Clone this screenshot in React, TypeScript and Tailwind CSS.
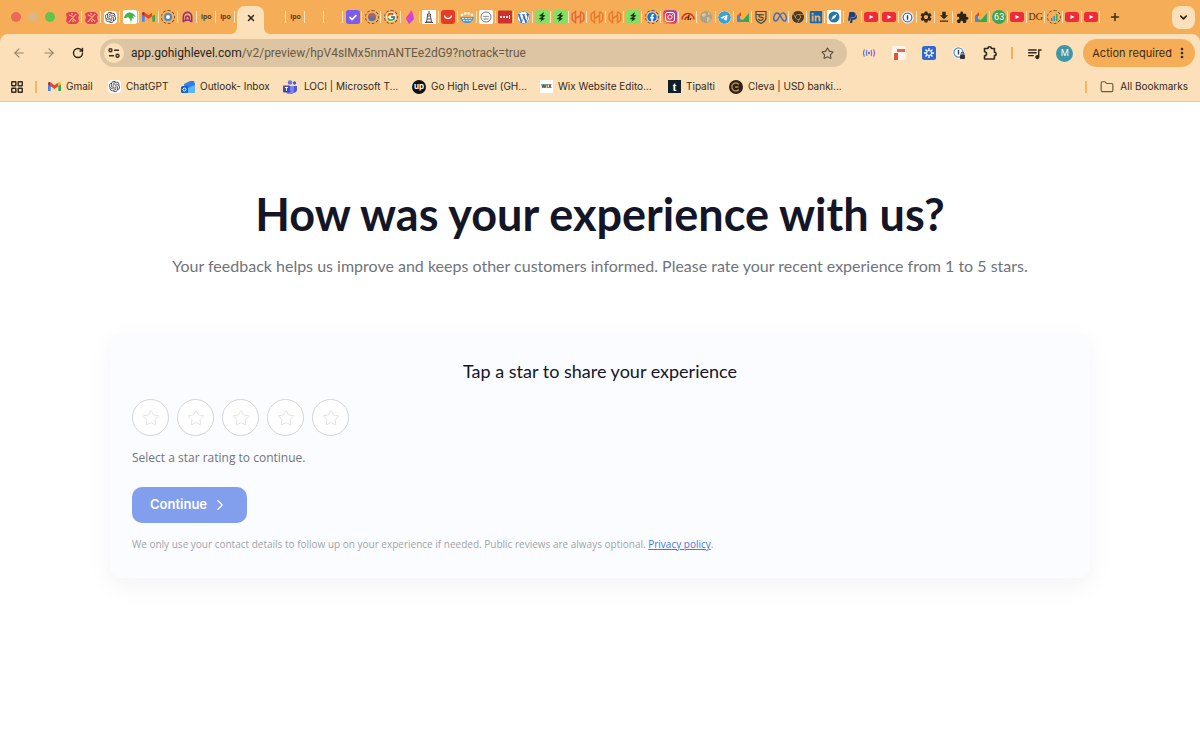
import { useState, type ReactNode } from 'react';
import {
  ArrowLeft,
  ArrowRight,
  ChevronDown,
  ChevronRight,
  Folder,
  LayoutGrid,
  Plus,
  RotateCw,
  Star,
  X,
} from 'lucide-react';
import {
  SiOpenai,
  SiTelegram,
  SiWordpress,
  SiInstagram,
  SiMeta,
  SiPaypal,
  SiGooglechrome,
} from 'react-icons/si';
import { FaFacebook, FaLinkedin } from 'react-icons/fa';
import { FcGoogle } from 'react-icons/fc';
import { MdDownload, MdExtension, MdMoreVert, MdQueueMusic, MdSettings } from 'react-icons/md';

const GmailIcon = () => (
  <svg viewBox="0 0 24 18" className="w-[13px]">
    <path d="M0 3v13a2 2 0 0 0 2 2h3V7L0 3z" fill="#4285f4" />
    <path d="M19 7v11h3a2 2 0 0 0 2-2V3l-5 4z" fill="#34a853" />
    <path d="M5 1v7l7 5 7-5V1l-7 5-7-5z" fill="#ea4335" />
    <path d="M0 3c0-3 3-4 5-2v7L0 4V3z" fill="#c5221f" />
    <path d="M24 3c0-3-3-4-5-2v7l5-4V3z" fill="#fbbc04" />
  </svg>
);

const GptIcon = () => (
  <span className="flex size-[13px] items-center justify-center rounded-sm bg-white">
    <SiOpenai className="size-[11px] text-[#333]" />
  </span>
);

const PinkIcon = () => (
  <svg viewBox="0 0 14 14" className="size-[13px]">
    <path d="M3 1h8l3 3-1 3 1 4-3 3H3l-3-3 1-4-1-4z" fill="#e0405a" />
    <path d="M3 12 11 3M3 4l4 2M11 11 7 8M6 2l1 2M8 12l-1-2" stroke="#f7b267" strokeWidth="1.300" fill="none" />
  </svg>
);

const LizardIcon = () => (
  <svg viewBox="0 0 14 14" className="size-[14px]">
    <rect width="14" height="14" rx="2" fill="#fff" />
    <path d="M1 8C2 2 9 0 13 7l-3-1 1 3-2-1-1 5-1-4-2-2-2 1z" fill="#43b649" />
  </svg>
);

// 점선 원으로 둘러싸인 파비콘 (로딩 중인 탭)
const Ringed = ({ children }: { children: ReactNode }) => (
  <span className="flex size-[14px] items-center justify-center rounded-full border border-dashed border-[#6b5334]">
    {children}
  </span>
);

const ArchIcon = () => (
  <svg viewBox="0 0 14 14" className="size-[13px]" fill="none" stroke="#9b2f86" strokeWidth="1.700">
    <path d="M2.500 12V6a4.500 4.500 0 0 1 9 0v6M2.500 11.500 5 10h4l2.500 1.500M5 10V7.500a2 2 0 0 1 4 0V10" />
  </svg>
);

const UpworkIcon = () => (
  <span className="font-['Liberation_Sans',sans-serif] text-[7px] leading-3 font-bold text-[#4b3a22]">ipo</span>
);

const CheckIcon = () => (
  <svg viewBox="0 0 14 14" className="size-[14px]">
    <rect width="14" height="14" rx="2.500" fill="#7b5cf0" />
    <path d="m3.500 7 2.500 2.500L10.500 5" stroke="#fff" strokeWidth="1.700" fill="none" />
  </svg>
);

const FlameIcon = () => (
  <svg viewBox="0 0 14 14" className="size-[14px]">
    <path d="M8 0c1 2 3 4 2 8l-4 6-3-5c0-3 4-5 5-9z" fill="#e63fd0" />
    <path d="M6 14c-1-3 3-5 4-9l1 4-5 5z" fill="#a94df0" />
  </svg>
);

const TowerIcon = () => (
  <svg viewBox="0 0 14 14" className="size-[14px]">
    <rect width="14" height="14" fill="#fff" />
    <path d="M7 1v3M5.500 4h3v2h-3zM5.500 6 4.500 12h5L8.500 6M5 9h4M3 12.500h8" stroke="#555" fill="none" />
  </svg>
);

const RedSmileIcon = () => (
  <svg viewBox="0 0 14 14" className="size-[14px]">
    <rect width="14" height="14" rx="3" fill="#e33b25" />
    <path d="M3.500 5.500c.5 4 6.500 4 7 0" stroke="#fff" strokeWidth="1.300" fill="none" />
  </svg>
);

const CrowdIcon = () => (
  <svg viewBox="0 0 14 14" className="size-[14px]">
    <path d="M0 7h14c-1 4-3 6-7 6S1 11 0 7z" fill="#4c9ed0" />
    <path d="M2 8.500h10M3 10.500h8" stroke="#d8ecf5" strokeDasharray="2 1" />
    <g fill="#eaf3ea">
      <circle cx="2" cy="5" r="1.400" />
      <circle cx="5.300" cy="3.500" r="1.400" />
      <circle cx="8.700" cy="3.500" r="1.400" />
      <circle cx="12" cy="5" r="1.400" />
    </g>
  </svg>
);

const StampIcon = () => (
  <svg viewBox="0 0 14 14" className="size-[14px]">
    <rect width="14" height="14" rx="2" fill="#fff" />
    <circle cx="7" cy="7" r="5" fill="none" stroke="#777" />
    <path d="M4 6.500c1-1 2 1 3 0s2 1 3 0M4.500 9h5" stroke="#777" fill="none" />
  </svg>
);

const DotsIcon = () => (
  <svg viewBox="0 0 14 14" className="size-[14px]">
    <rect width="14" height="13" y=".5" rx="1" fill="#c8322f" />
    <g fill="#fff">
      <circle cx="3" cy="7" r="1.100" />
      <circle cx="6" cy="7" r="1.100" />
      <circle cx="9" cy="7" r="1.100" />
      <path d="M11 5h1v4h-1z" />
    </g>
  </svg>
);

const GreenBoltIcon = () => (
  <svg viewBox="0 0 14 14" className="size-[14px]">
    <rect width="14" height="14" rx="2.500" fill="#84e063" />
    <path d="M9 2 4 6l3 .5L3.500 9l3 .5L5 12l5-3.500-2.500-.5 3-2.500-2.500-.500z" fill="#16351d" />
  </svg>
);

const HexIcon = ({ color }: { color: string }) => (
  <svg viewBox="0 0 14 14" className="size-[14px]" fill="none" stroke={color} strokeWidth="1.500">
    <path d="M1.200 10V4l3.300-2.500v11L1.200 10M4.500 8.500l5-3M9.500 1.500v11l3.300-2.500V4L9.500 1.500" />
  </svg>
);

const GaugeIcon = () => (
  <svg viewBox="0 0 14 14" className="size-[14px]" fill="none" stroke="#cc2f1c" strokeWidth="1.500">
    <path d="M1 9.500a6 6 0 0 1 12 0M4 10a3 3 0 0 1 3-3" />
    <path d="m7 10 1-5M9 10l1-2" stroke="#5a2a17" />
  </svg>
);

const GlobeIcon = () => (
  <svg viewBox="0 0 14 14" className="size-[14px]">
    <circle cx="7" cy="7" r="6" fill="#a9a28f" />
    <path d="M3 4l3-1 1 2-2 2-2-1zM8 7l3 1-1 3-2 1zM9 2l2 2-2 1z" fill="#e5c590" />
  </svg>
);

const MeetIcon = () => (
  <svg viewBox="0 0 14 14" className="size-[14px]">
    <path d="M1 6l4-4v4z" fill="#ea4335" />
    <path d="M1 6h3v6H2a1 1 0 0 1-1-1z" fill="#4285f4" />
    <path d="M5 2h3v4H5z" fill="#fbbc04" />
    <path d="M4 12V9l3 1 6-7v9z" fill="#34a853" />
  </svg>
);

const ShieldIcon = () => (
  <svg viewBox="0 0 14 14" className="size-[14px]" fill="none" stroke="#4a4a45" strokeWidth="1.200">
    <path d="M2 1.500h10V8c0 3-3 4.500-5 5.500C5 12.500 2 11 2 8z" />
    <path d="M2 4.500h6M10 5C7 4 4 5 5 6.500s5 0 4 2.500-4 1-5 0" />
  </svg>
);

const CompassIcon = () => (
  <svg viewBox="0 0 14 14" className="size-[14px]">
    <rect width="14" height="14" fill="#fff" />
    <circle cx="7" cy="7" r="5.500" fill="#2478a8" />
    <path d="m10 4-2 4-4 2 2-4z" fill="#fff" />
  </svg>
);

const OnePassIcon = () => (
  <svg viewBox="0 0 14 14" className="size-[13px]">
    <circle cx="7" cy="7" r="6.500" fill="#fff" />
    <circle cx="7" cy="7" r="4.700" fill="none" stroke="#3b74c9" strokeWidth="1.400" />
    <path d="M7 4.500v5" stroke="#33445c" strokeWidth="1.600" />
  </svg>
);

const YoutubeIcon = () => (
  <svg viewBox="0 0 14 10" className="w-[14px]">
    <rect width="14" height="10" rx="2.500" fill="#ed2b3a" />
    <path d="m5.500 3 4 2-4 2z" fill="#fff" />
  </svg>
);

const ChatCountIcon = () => (
  <span className="flex size-[14px] items-center justify-center rounded-full bg-[#3fa35b] font-['Roboto',sans-serif] text-[9px] leading-none text-white">
    63
  </span>
);

const MonogramIcon = () => (
  <span className="font-['Liberation_Serif',serif] text-[10px] leading-3 text-[#4a3212]">DG</span>
);

const BarsIcon = () => (
  <svg viewBox="0 0 8 8" className="size-2">
    <path d="M1 8V5h1.500v3zM3.500 8V3H5v5z" fill="#3c8fc0" />
    <path d="M6 8V1h1.500v7z" fill="#4aa84a" />
  </svg>
);

const firstTabs: ReactNode[] = [
  <PinkIcon />,
  <PinkIcon />,
  <GptIcon />,
  <LizardIcon />,
  <GmailIcon />,
  <Ringed><span className="size-2 rounded-full border-2 border-[#4d86c6] bg-white" /></Ringed>,
  <ArchIcon />,
  <UpworkIcon />,
  <UpworkIcon />,
];

const middleTabs: ReactNode[] = [
  null,
  <UpworkIcon />,
  null,
  null,
  <CheckIcon />,
  <Ringed><span className="size-2 rounded-full bg-linear-to-b from-[#b95a5a] to-[#3f6cb0]" /></Ringed>,
  <Ringed><FcGoogle className="size-[10px] rounded-full bg-white" /></Ringed>,
  <FlameIcon />,
  <TowerIcon />,
  <RedSmileIcon />,
  <CrowdIcon />,
  <StampIcon />,
];

const lastTabs: ReactNode[] = [
  <DotsIcon />,
  <SiWordpress className="size-[13px] rounded-full bg-white text-[#2d6bc0]" />,
  <GreenBoltIcon />,
  <GreenBoltIcon />,
  <HexIcon color="#e4663a" />,
  <HexIcon color="#ea7a2a" />,
  <HexIcon color="#ea7a2a" />,
  <GreenBoltIcon />,
  <Ringed><FaFacebook className="size-[10px] rounded-full bg-white text-[#1b6fe0]" /></Ringed>,
  <span className="flex size-[14px] items-center justify-center rounded bg-linear-to-tr from-[#f9a13a] via-[#e22c6a] to-[#8a3ac8]">
    <SiInstagram className="size-[10px] text-white" />
  </span>,
  <GaugeIcon />,
  <GlobeIcon />,
  <SiTelegram className="size-[13px] rounded-full bg-white text-[#35a3dc]" />,
  <MeetIcon />,
  <ShieldIcon />,
  <SiMeta className="size-[14px] text-[#3d6db5]" />,
  <SiGooglechrome className="size-[12px] text-[#453a2b]" />,
  <FaLinkedin className="size-[14px] text-[#1169b5]" />,
  <CompassIcon />,
  <SiPaypal className="size-[11px] text-[#1d3f86]" />,
  <YoutubeIcon />,
  <YoutubeIcon />,
  <OnePassIcon />,
  <MdSettings className="size-[14px] text-[#33291a]" />,
  <MdDownload className="size-[14px] text-[#33291a]" />,
  <MdExtension className="size-[13px] text-[#2a2218]" />,
  <MeetIcon />,
  <ChatCountIcon />,
  <YoutubeIcon />,
  <MonogramIcon />,
  <Ringed><BarsIcon /></Ringed>,
  <YoutubeIcon />,
  <YoutubeIcon />,
];

const Tabs = ({ icons, className }: { icons: ReactNode[]; className: string }) => (
  <div className={`flex ${className}`}>
    {icons.map((icon, i) => (
      <div key={i} className="relative flex h-[14px] min-w-0 flex-1 items-center justify-center">
        {icon}
        <span className="absolute right-0 h-3 w-px bg-[#fde3bd]" />
      </div>
    ))}
  </div>
);

const TabStrip = () => (
  <div className="flex h-[34px] items-center bg-[#f5ae57]">
    <div className="flex w-[63px] items-center gap-[7px] pl-[11px]">
      <span className="size-[10px] rounded-full bg-[#ec695c]" />
      <span className="size-[10px] rounded-full bg-[#dcb587]" />
      <span className="size-[10px] rounded-full bg-[#5ec548]" />
    </div>
    <Tabs icons={firstTabs} className="w-[172px]" />
    <div className="flex w-8 items-end self-stretch pl-[2px]">
      <div className="relative flex h-7 w-[27px] items-center justify-center rounded-t-lg bg-[#fbe0b9]">
        <button aria-label="Close tab" className="pb-[5px]">
          <X className="size-[10px] text-[#2e2519]" strokeWidth={3.5} />
        </button>
        <svg viewBox="0 0 6 6" className="absolute bottom-0 -left-1.5 size-1.5" fill="#fbe0b9">
          <path d="M6 0v6H0a6 6 0 0 0 6-6z" />
        </svg>
        <svg viewBox="0 0 6 6" className="absolute -right-1.5 bottom-0 size-1.5" fill="#fbe0b9">
          <path d="M0 0v6h6a6 6 0 0 1-6-6z" />
        </svg>
      </div>
    </div>
    <Tabs icons={middleTabs} className="w-[229px]" />
    <Tabs icons={lastTabs} className="min-w-0 flex-1" />
    <div className="flex w-[100px] items-center justify-between pr-[5px] pl-[9px]">
      <button aria-label="New tab">
        <Plus className="size-3 text-[#3a2c18]" strokeWidth={3} />
      </button>
      <button aria-label="Search tabs" className="flex size-[23px] items-center justify-center rounded-lg bg-[#fbe0b9]">
        <ChevronDown className="size-[11px] text-[#2e2519]" strokeWidth={3.5} />
      </button>
    </div>
  </div>
);

const Toolbar = () => (
  <div className="flex h-[38px] items-center pr-[5px] pl-3">
    <div className="flex w-[88px] items-center gap-4">
      <button aria-label="Back"><ArrowLeft className="size-[14px] text-[#9a8466]" /></button>
      <button aria-label="Forward"><ArrowRight className="size-[14px] text-[#9a8466]" /></button>
      <button aria-label="Reload"><RotateCw className="size-3 text-[#2e2519]" strokeWidth={2.8} /></button>
    </div>
    <div className="flex h-7 flex-1 items-center rounded-full bg-[#ddc5a3] pr-[13px] pl-1">
      <button aria-label="View site information" className="flex size-5 items-center justify-center rounded-full bg-[#fbe0b9]">
        <svg viewBox="0 0 12 12" className="size-3" fill="none" stroke="#3b2f20" strokeWidth="1.400">
          <circle cx="2.500" cy="3.200" r="1.500" />
          <path d="M6 3.200h5M1 8.800h5" />
          <circle cx="9.500" cy="8.800" r="1.500" />
        </svg>
      </button>
      <div className="ml-[7px] flex-1 font-['Roboto',sans-serif] text-[12px] whitespace-nowrap text-[#6a5a44]">
        <span className="text-[#2b2318]">app.gohighlevel.com</span>/v2/preview/hpV4sIMx5nmANTEe2dG9?notrack=true
      </div>
      <button aria-label="Bookmark this tab"><Star className="size-[13px] text-[#5c4d3a]" strokeWidth={2} /></button>
    </div>
    <div className="flex items-center pl-[15px]">
      <svg viewBox="0 0 14 14" className="size-[14px]" fill="none" strokeWidth="1.200">
        <path d="M2.500 3.500q-2 3.500 0 7M5 4q-1.200 3 0 6" stroke="#5b7be0" />
        <path d="M9 4q1.200 3 0 6M11.500 3.500q2 3.500 0 7" stroke="#a45be0" />
        <circle cx="7" cy="7" r="1.200" fill="#7b68d8" />
      </svg>
      <svg viewBox="0 0 14 14" className="ml-4 size-[14px]">
        <rect width="14" height="14" rx="2" fill="#fff5ea" />
        <path d="M2 7h4v7H2z" fill="#df5235" />
        <path d="M5 3h8v3H5z" fill="#e5684d" />
      </svg>
      <svg viewBox="0 0 14 14" className="ml-4 size-[14px]">
        <rect width="14" height="14" rx="2.500" fill="#2e69d1" />
        <path d="M7 2v10M2 7h10M3.500 3.500l7 7M10.500 3.500l-7 7" stroke="#fff" strokeWidth="1.300" />
        <circle cx="7" cy="7" r="2.500" fill="#2e69d1" stroke="#fff" />
      </svg>
      <svg viewBox="0 0 14 14" className="ml-4 size-[14px]">
        <circle cx="6.500" cy="6.500" r="6" fill="#fff" />
        <circle cx="6.500" cy="6.500" r="4.600" fill="none" stroke="#4a8ee0" strokeWidth="1.200" />
        <path d="M6.500 4v4.500" stroke="#444" strokeWidth="1.500" />
        <rect x="8" y="8.500" width="5" height="4.500" rx="1" fill="#333" />
        <path d="M9.200 8.500V7.500a1.300 1.300 0 0 1 2.600 0v1" stroke="#333" fill="none" />
      </svg>
      <button aria-label="Extensions" className="ml-4">
        <svg viewBox="0 0 16 16" className="size-4" fill="none" stroke="#33291a" strokeWidth="1.600" strokeLinejoin="round">
          <path d="M2.500 3.500H6a1.700 1.700 0 0 1 3.400 0h3v3.700a1.700 1.700 0 0 1 0 3.400V14H2.500v-3.200a2 2 0 0 0 0-4z" />
        </svg>
      </button>
      <span className="ml-[13px] h-3 w-[2px] bg-[#f5ae57]" />
      <button aria-label="Media controls" className="ml-[13px]"><MdQueueMusic className="size-[17px] text-[#33291a]" /></button>
      <button aria-label="Profile" className="ml-[13px] flex size-[17px] items-center justify-center rounded-full bg-[#3f97a5] text-[9px] text-white">M</button>
      <button className="ml-[10px] flex h-7 items-center rounded-full bg-[#f5ae57] pr-[5px] pl-[9px] text-[11px] whitespace-nowrap text-[#3b2a12]">
        Action required
        <MdMoreVert className="ml-[2px] size-4" />
      </button>
    </div>
  </div>
);

const bookmarks: { label: string; icon: ReactNode; className: string }[] = [
  { label: 'Gmail', icon: <GmailIcon />, className: 'w-[60px]' },
  { label: 'ChatGPT', icon: <GptIcon />, className: 'w-[73px]' },
  {
    label: 'Outlook- Inbox',
    className: 'w-[102px]',
    icon: (
      <svg viewBox="0 0 14 14" className="size-[14px]">
        <path d="M3 4 9 1h4l1 3v7a2 2 0 0 1-2 2H4z" fill="#2f7fe8" />
        <path d="m5 9 9-4v6a2 2 0 0 1-2 2H5z" fill="#5cb6f5" />
        <rect y="6" width="7" height="7" rx="1.500" fill="#1263c4" />
        <circle cx="3.500" cy="9.500" r="1.500" fill="none" stroke="#fff" />
      </svg>
    ),
  },
  {
    label: 'LOCI | Microsoft T...',
    className: 'w-[129px]',
    icon: (
      <svg viewBox="0 0 14 14" className="mr-[2px] size-[14px]">
        <circle cx="7" cy="2.500" r="2.300" fill="#6a74e8" />
        <circle cx="11.500" cy="3" r="1.700" fill="#5059c9" />
        <path d="M9 6h5v4a3 3 0 0 1-5 2z" fill="#5059c9" />
        <path d="M3 6h8v4.500a3.500 3.500 0 0 1-8 0z" fill="#7b83eb" />
        <rect y="5.500" width="7" height="7" rx="1" fill="#4048c4" />
        <path d="M2 7.500h3M3.500 7.500v3.500" stroke="#fff" />
      </svg>
    ),
  },
  {
    label: 'Go High Level (GH...',
    className: 'w-[128px]',
    icon: (
      <span className="flex size-[14px] items-center justify-center rounded-full bg-[#111] pb-[2px] text-[8px] leading-none font-bold text-white">up</span>
    ),
  },
  {
    label: 'Wix Website Edito...',
    className: 'w-[128px]',
    icon: (
      <span className="flex size-[13px] items-center justify-center bg-white text-[5px] leading-none font-bold text-[#111]">WIX</span>
    ),
  },
  {
    label: 'Tipalti',
    className: 'w-[61px]',
    icon: (
      <span className="flex size-[13px] items-center justify-center bg-[#0d1f2d] font-['Liberation_Serif',serif] text-[12px] leading-none font-bold text-white">t</span>
    ),
  },
  {
    label: 'Cleva | USD banki...',
    className: 'w-[120px]',
    icon: (
      <svg viewBox="0 0 14 14" className="size-[14px]">
        <circle cx="7" cy="7" r="7" fill="#2b2117" />
        <path d="M10 4.500a4 4 0 1 0 0 5M9.500 7H6" stroke="#b28a4e" strokeWidth="1.500" fill="none" />
      </svg>
    ),
  },
];

const BookmarksBar = () => (
  <nav className="flex h-[30px] items-center border-b border-[#d9c9b0] pr-3 pl-[10px] text-[10px] whitespace-nowrap text-[#33291a]">
    <button aria-label="Apps"><LayoutGrid className="size-[14px]" strokeWidth={2.5} /></button>
    <span className="ml-[11px] h-3 w-[2px] bg-[#f7b55c]" />
    <div className="ml-[11px] flex flex-1">
      {bookmarks.map((item) => (
        <a key={item.label} href="#" className={`flex shrink-0 items-center gap-[5px] ${item.className}`}>
          {item.icon}
          {item.label}
        </a>
      ))}
    </div>
    <span className="h-3 w-[2px] bg-[#f7b55c]" />
    <a href="#" className="ml-[13px] flex items-center gap-[6px]">
      <Folder className="size-[14px] text-[#6a5a44]" />
      All Bookmarks
    </a>
  </nav>
);

const RatingCard = () => {
  const [rating, setRating] = useState(0);

  return (
    <section className="mx-auto mt-[55px] w-full max-w-[980px] rounded-xl bg-[#fafcff] px-[22px] pt-6 pb-[25px] shadow-[0_8px_24px_rgba(0,0,0,0.05)]">
      <h2 className="text-center text-[18px] leading-7 text-[#141627]">Tap a star to share your experience</h2>
      <div className="mt-[14px] flex gap-2">
        {[1, 2, 3, 4, 5].map((value) => (
          <button
            key={value}
            aria-label={`${value} star`}
            className="flex size-[37px] items-center justify-center rounded-full border border-[#d3d4d7] bg-white"
            onClick={() => setRating(value)}
          >
            <Star className={`size-[18px] ${value <= rating ? 'text-amber-400' : 'text-[#dedede]'}`} strokeWidth={1.2} />
          </button>
        ))}
      </div>
      <p className="mt-3 font-['Open_Sans',sans-serif] text-[12px] leading-5 text-[#70737b]">Select a star rating to continue.</p>
      <button className="mt-[19px] flex h-9 items-center gap-1 rounded-[10px] bg-[#829fee] px-[18px] font-['Inter',sans-serif] text-[13px] font-semibold text-white">
        Continue
        <ChevronRight className="size-[18px]" strokeWidth={1.5} />
      </button>
      <p className="mt-3 font-['Open_Sans',sans-serif] text-[10px] leading-[18px] text-[#a2a4a9]">
        We only use your contact details to follow up on your experience if needed. Public reviews are always optional.{' '}
        <a href="#" className="text-[#4a75dc] underline">Privacy policy</a>.
      </p>
    </section>
  );
};

const App = () => {
  return (
    <div className="min-h-screen bg-white font-['Inter',sans-serif]">
      <header className="bg-[#f5ae57]">
        <TabStrip />
        <div className="rounded-t-lg bg-[#fbe0b9]">
          <Toolbar />
          <BookmarksBar />
        </div>
      </header>
      <main className="px-6 pt-[84px] pb-12 font-['Lato',sans-serif]">
        <h1 className="text-center text-[45px] leading-[56px] font-bold text-[#141627]">
          How was your experience with us?
        </h1>
        <p className="mt-3 text-center text-[16px] leading-6 text-[#70737b]">
          Your feedback helps us improve and keeps other customers informed. Please rate your recent experience from 1 to 5 stars.
        </p>
        <RatingCard />
      </main>
    </div>
  );
};

export default App;
